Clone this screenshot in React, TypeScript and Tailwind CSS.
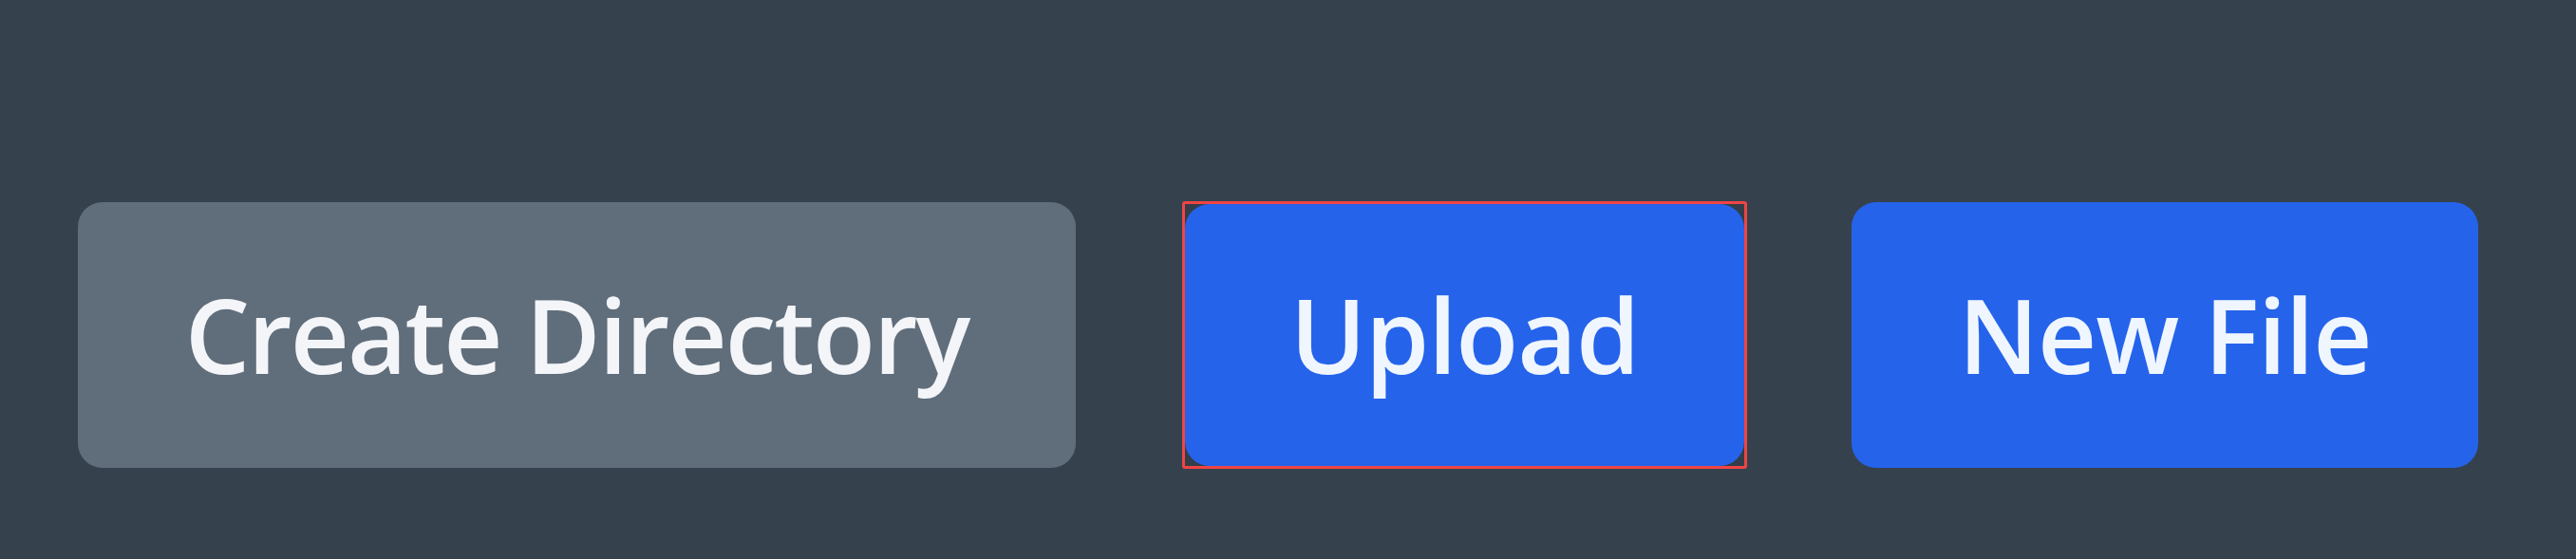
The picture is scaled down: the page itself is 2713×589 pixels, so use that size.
export default function App() {
  return (
    <div className="w-[2713px] h-[589px] bg-[#36414e] pt-[212px] pl-[82px] font-['Open_Sans',sans-serif]">
      <div className="flex items-center">
        {/* Create directory */}
        <button className="shrink-0 w-[1051px] h-[280px] rounded-[26px] bg-[#606d7b] text-[#f3f5f8] text-[108px] font-semibold leading-none whitespace-nowrap tracking-[-2px]">
          Create Directory
        </button>

        {/* Upload, selected */}
        <div className="shrink-0 ml-[112px] border-[3px] border-[#ef4444] rounded-[3px] bg-[#343e4a]">
          <button className="block w-[589px] h-[276px] rounded-[26px] bg-[#2563eb] text-[#eff6ff] text-[108px] font-semibold leading-none whitespace-nowrap tracking-[-1px]">
            Upload
          </button>
        </div>

        <button className="shrink-0 ml-[110px] w-[660px] h-[280px] rounded-[26px] bg-[#2563eb] text-[#eff6ff] text-[108px] font-semibold leading-none whitespace-nowrap tracking-[-1px]">
          New File
        </button>
      </div>
    </div>
  );
}
